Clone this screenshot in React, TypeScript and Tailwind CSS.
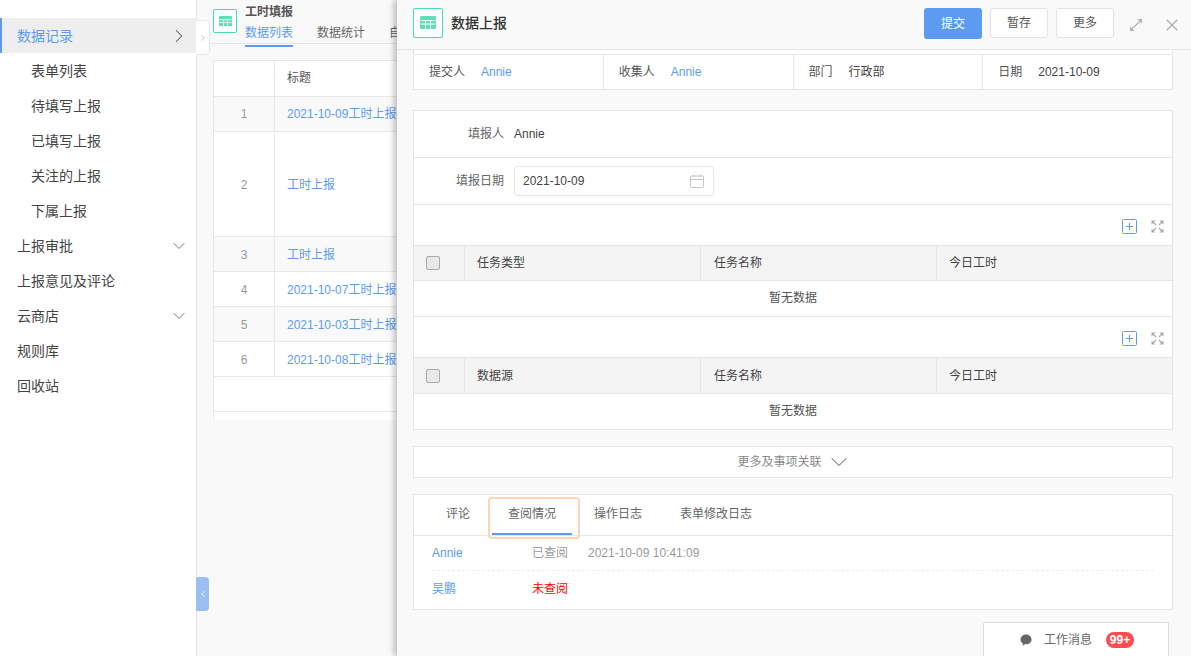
import { ChevronDown, ChevronLeft, ChevronRight, X } from "lucide-react";
import type { ReactNode } from "react";

const BLUE = "text-[#5c9bf0]";

// Green grid mark used beside both page titles
function SheetIcon({ box, size }: { box: string; size: number }) {
  return (
    <div className={`flex shrink-0 items-center justify-center rounded-[2px] border border-[#46dcae] bg-white ${box}`}>
      <svg width={size} height={size * 0.82} viewBox="0 0 16 13">
        <rect x="0" y="0" width="16" height="13" rx="1" fill="#5fe0b4" />
        <path d="M0.5 4.5H15.5M0.5 8H15.5M5.5 4.5V13M10.5 4.5V13" stroke="#fff" strokeWidth="1" />
      </svg>
    </div>
  );
}

function FullscreenIcon() {
  return (
    <svg width="13" height="13" viewBox="0 0 13 13" fill="none">
      <path d="M1.5 1.5L5 5M11.5 1.5L8 5M1.5 11.5L5 8M11.5 11.5L8 8" stroke="#a8a8a8" strokeWidth="1.1" />
      <path d="M0.5 0.5H4.5L0.5 4.5ZM12.5 0.5H8.5L12.5 4.5ZM0.5 12.5H4.5L0.5 8.5ZM12.5 12.5H8.5L12.5 8.5Z" fill="#a8a8a8" />
    </svg>
  );
}

function ResizeIcon() {
  return (
    <svg width="12" height="12" viewBox="0 0 12 12" fill="none" className="ml-4 mr-5">
      <path d="M2 10L10 2" stroke="#b0b0b0" strokeWidth="1.1" />
      <path d="M12 0V4.5L7.5 0ZM0 12V7.5L4.5 12Z" fill="#b0b0b0" />
    </svg>
  );
}

function Sidebar() {
  const sub = ["表单列表", "待填写上报", "已填写上报", "关注的上报", "下属上报"];
  const top: { label: string; arrow?: boolean }[] = [
    { label: "上报审批", arrow: true },
    { label: "上报意见及评论" },
    { label: "云商店", arrow: true },
    { label: "规则库" },
    { label: "回收站" },
  ];
  return (
    <aside className="w-[197px] shrink-0 border-r border-[#e6e6e6] bg-white pt-[18px] text-[14px] text-[#444]">
      <div className={`flex h-[35px] items-center justify-between border-l-2 border-[#5c9bf0] bg-[#eeeeee] pl-[15px] pr-[6px] pt-px ${BLUE}`}>
        数据记录
        <ChevronRight size={22} strokeWidth={1.1} className="text-[#555]" />
      </div>
      {sub.map((s) => (
        <div key={s} className="flex h-[35px] items-center pl-[31px] pt-px">{s}</div>
      ))}
      {top.map((t) => (
        <div key={t.label} className="flex h-[35px] items-center justify-between pl-[17px] pr-[7px] pt-px">
          {t.label}
          {t.arrow && <ChevronDown size={20} strokeWidth={1.1} className="text-[#666]" />}
        </div>
      ))}
    </aside>
  );
}

function ListPage() {
  const rows = [
    { n: 1, t: "2021-10-09工时上报", h: "h-[35px]", bg: "bg-[#f9f9f9]" },
    { n: 2, t: "工时上报", h: "h-[105px] pt-px", bg: "bg-white" },
    { n: 3, t: "工时上报", h: "h-[35px] pt-px", bg: "bg-[#f9f9f9]" },
    { n: 4, t: "2021-10-07工时上报", h: "h-[35px] pt-px", bg: "bg-white" },
    { n: 5, t: "2021-10-03工时上报", h: "h-[35px] pt-px", bg: "bg-[#f9f9f9]" },
    { n: 6, t: "2021-10-08工时上报", h: "h-[35px] pt-px", bg: "bg-white" },
  ];
  return (
    <main className="min-w-0 flex-1 bg-[#f9f9f9]">
      <div className="flex h-[44px] gap-2 border-b border-[#e6e6e6] pl-4">
        <div className="pt-[9px]">
          <SheetIcon box="h-6 w-6" size={13} />
        </div>
        <div className="pt-[4px]">
          <div className="text-[12px] font-bold leading-[16px] text-[#555]">工时填报</div>
          <div className="mt-[3px] flex gap-6 whitespace-nowrap text-[12px] leading-[20px] text-[#666]">
            <span className={`h-[24px] border-b-2 border-[#5c9bf0] ${BLUE}`}>数据列表</span>
            <span>数据统计</span>
            <span>自定义</span>
          </div>
        </div>
      </div>
      <div className="ml-4 mt-4 h-[360px] overflow-hidden border-l border-t border-[#e8e8e8] bg-white text-[12px]">
        <div className="flex h-[36px] border-b border-[#e8e8e8]">
          <div className="w-[61px] shrink-0 border-r border-[#e8e8e8]" />
          <div className="flex items-center pb-px pl-3 text-[#555]">标题</div>
        </div>
        {rows.map((r) => (
          <div key={r.n} className={`flex border-b border-[#e8e8e8] ${r.h} ${r.bg}`}>
            <div className="flex w-[61px] shrink-0 items-center justify-center border-r border-[#e8e8e8] text-[#999]">{r.n}</div>
            <div className={`flex items-center whitespace-nowrap pl-3 ${BLUE}`}>{r.t}</div>
          </div>
        ))}
        <div className="h-[35px] border-b border-[#e8e8e8]" />
      </div>
    </main>
  );
}

function HeadButton({ children, primary }: { children: ReactNode; primary?: boolean }) {
  return primary ? (
    <button className="h-[31px] w-[58px] rounded-[3px] bg-[#5c9bf0] text-[12px] text-white">{children}</button>
  ) : (
    <button className="h-[30px] w-[58px] rounded-[3px] border border-[#e3e3e3] bg-white text-[12px] text-[#555]">{children}</button>
  );
}

function InfoCell({ label, value, link }: { label: string; value: string; link?: boolean }) {
  return (
    <div className="flex flex-1 items-center gap-4 border-r border-[#e6e6e6] pl-[15px] last:border-r-0">
      <span className="text-[#555]">{label}</span>
      <span className={link ? BLUE : "text-[#444]"}>{value}</span>
    </div>
  );
}

function SubTable({ first, last }: { first: string; last?: boolean }) {
  return (
    <div>
      <div className="flex h-10 items-center justify-end gap-[14px] pr-2 pt-[2px]">
        <svg width="15" height="15" viewBox="0 0 15 15" fill="none">
          <rect x="0.5" y="0.5" width="14" height="14" rx="1" stroke="#5c9bf0" />
          <path d="M4 7.5H11M7.5 4V11" stroke="#5c9bf0" />
        </svg>
        <FullscreenIcon />
      </div>
      <div className={`flex border-y border-[#e6e6e6] bg-[#f4f4f4] text-[#444] ${last ? "h-[37px]" : "h-[36px]"}`}>
        <div className="flex w-[51px] shrink-0 items-center border-r border-[#e6e6e6] pl-3">
          <div className="h-[14px] w-[14px] rounded-[2px] border border-[#aaa] bg-[#e8e8e8]" />
        </div>
        <div className="flex flex-1 items-center border-r border-[#e6e6e6] pl-3">{first}</div>
        <div className="flex w-[236px] items-center border-r border-[#e6e6e6] pl-[13px]">任务名称</div>
        <div className="flex w-[235px] items-center pl-3">今日工时</div>
      </div>
      {last ? (
        <div className="flex h-[35px] items-center justify-center pb-px text-[#555]">暂无数据</div>
      ) : (
        <div className="flex h-[36px] items-center justify-center border-b border-[#e6e6e6] pb-px text-[#555]">暂无数据</div>
      )}
    </div>
  );
}

function ReportDrawer() {
  return (
    <section className="absolute inset-y-0 left-[397px] right-0 overflow-hidden bg-[#f9f9f9] text-[12px] shadow-[-3px_0_6px_rgba(0,0,0,0.25)]">
      <header className="flex h-[50px] items-center border-b border-[#e6e6e6] pl-4 pr-[9px]">
        <SheetIcon box="h-[30px] w-[30px] -mt-[4px]" size={16} />
        <h1 className="-mt-[2px] ml-2 text-[14px] font-medium text-[#333]">数据上报</h1>
        <div className="-mt-[3px] ml-auto flex items-start gap-2 self-start pt-[11px]">
          <HeadButton primary>提交</HeadButton>
          <HeadButton>暂存</HeadButton>
          <HeadButton>更多</HeadButton>
        </div>
        <ResizeIcon />
        <X size={20} strokeWidth={1.3} className="text-[#aaa]" />
      </header>

      <div className="pl-4 pr-[18px]">
        <div className="h-[5px] rounded-b-[2px] border-x border-b border-[#e6e6e6] bg-white" />
        <div className="flex h-[35px] border-x border-b border-[#e6e6e6] bg-white">
          <InfoCell label="提交人" value="Annie" link />
          <InfoCell label="收集人" value="Annie" link />
          <InfoCell label="部门" value="行政部" />
          <InfoCell label="日期" value="2021-10-09" />
        </div>

        <div className="mt-[20px] border border-[#e6e6e6] bg-white">
          <div className="flex h-[47px] items-center gap-[10px] border-b border-[#e6e6e6]">
            <span className="w-[90px] text-right text-[#666]">填报人</span>
            <span className="text-[#444]">Annie</span>
          </div>
          <div className="flex h-[47px] items-center gap-[10px] border-b border-[#e6e6e6]">
            <span className="w-[90px] text-right text-[#666]">填报日期</span>
            <div className="flex h-[30px] w-[200px] items-center justify-between rounded-[3px] border border-[#e6e6e6] pl-2 pr-[9px] text-[#444]">
              2021-10-09
              <svg width="14" height="14" viewBox="0 0 14 14" fill="none" stroke="#c4c4c4">
                <rect x="0.5" y="2" width="13" height="11.5" rx="1" />
                <path d="M0.5 5.5H13.5M3.5 0.5V3M10.5 0.5V3" />
              </svg>
            </div>
          </div>
          <SubTable first="任务类型" />
          <SubTable first="数据源" last />
        </div>

        <button className="mt-4 flex h-[32px] w-full items-center justify-center gap-[3px] border border-[#e6e6e6] bg-white pl-[4px] text-[#888]">
          更多及事项关联
          <ChevronDown size={28} strokeWidth={0.9} className="text-[#777]" />
        </button>

        <div className="mt-4 h-[116px] border border-[#e6e6e6] bg-white">
          <div className="relative flex h-[41px] border-b border-[#e6e6e6] pl-[32px] text-[#666]">
            <span className="pt-[10px]">评论</span>
            <span className="ml-[38px] pt-[10px]">查阅情况</span>
            <span className="ml-[38px] pt-[10px]">操作日志</span>
            <span className="ml-[38px] pt-[10px]">表单修改日志</span>
            <div className="absolute left-[74px] top-[2px] flex h-[42px] w-[92px] items-end rounded-[4px] border-2 border-[#fdd5b8] pb-[2px] pl-[2px]">
              <div className="h-[2px] w-[80px] bg-[#5c9bf0]" />
            </div>
          </div>
          <div className="px-[18px]">
            <div className="flex h-[35px] items-center border-b border-dashed border-[#eee]">
              <span className={`w-[100px] ${BLUE}`}>Annie</span>
              <span className="w-[56px] text-[#999]">已查阅</span>
              <span className="text-[#999]">2021-10-09 10:41:09</span>
            </div>
            <div className="flex h-[35px] items-center">
              <span className={`w-[100px] ${BLUE}`}>吴鹏</span>
              <span className="text-[#f00]">未查阅</span>
            </div>
          </div>
        </div>
      </div>

      <div className="absolute bottom-0 left-[586px] flex h-[34px] w-[186px] items-center rounded-t-[2px] border-x border-t border-[#ddd] bg-white pl-[36px] text-[#666]">
        <svg width="12" height="12" viewBox="0 0 12 12" fill="#666">
          <path d="M6 0.5C9.1 0.5 11.5 2.7 11.5 5.5S9.1 10.3 6 10.3C5.6 10.3 5.2 10.3 4.8 10.2L2.8 11.7V9.5C1.4 8.6 0.5 7.2 0.5 5.5 0.5 2.7 2.9 0.5 6 0.5Z" />
        </svg>
        <span className="ml-3">工作消息</span>
        <span className="ml-[14px] flex h-4 w-[28px] items-center justify-center rounded-full bg-[#ff4d4f] font-bold text-white">99+</span>
      </div>
    </section>
  );
}

export default function App() {
  return (
    <div className="relative flex h-[656px] w-[1191px] overflow-hidden bg-[#f9f9f9] font-['Liberation_Sans','Noto_Sans_CJK_SC',sans-serif]">
      <Sidebar />
      <ListPage />
      <button className="absolute left-[196px] top-[20px] flex h-[35px] w-[14px] items-center justify-center rounded-r-[5px] border border-l-0 border-[#e6e6e6] bg-white text-[#bbb]">
        <ChevronRight size={10} />
      </button>
      <button className="absolute left-[196px] top-[577px] flex h-[34px] w-[13px] items-center justify-center rounded-r-[4px] bg-[#9bbff0] text-white">
        <ChevronLeft size={10} />
      </button>
      <ReportDrawer />
    </div>
  );
}
